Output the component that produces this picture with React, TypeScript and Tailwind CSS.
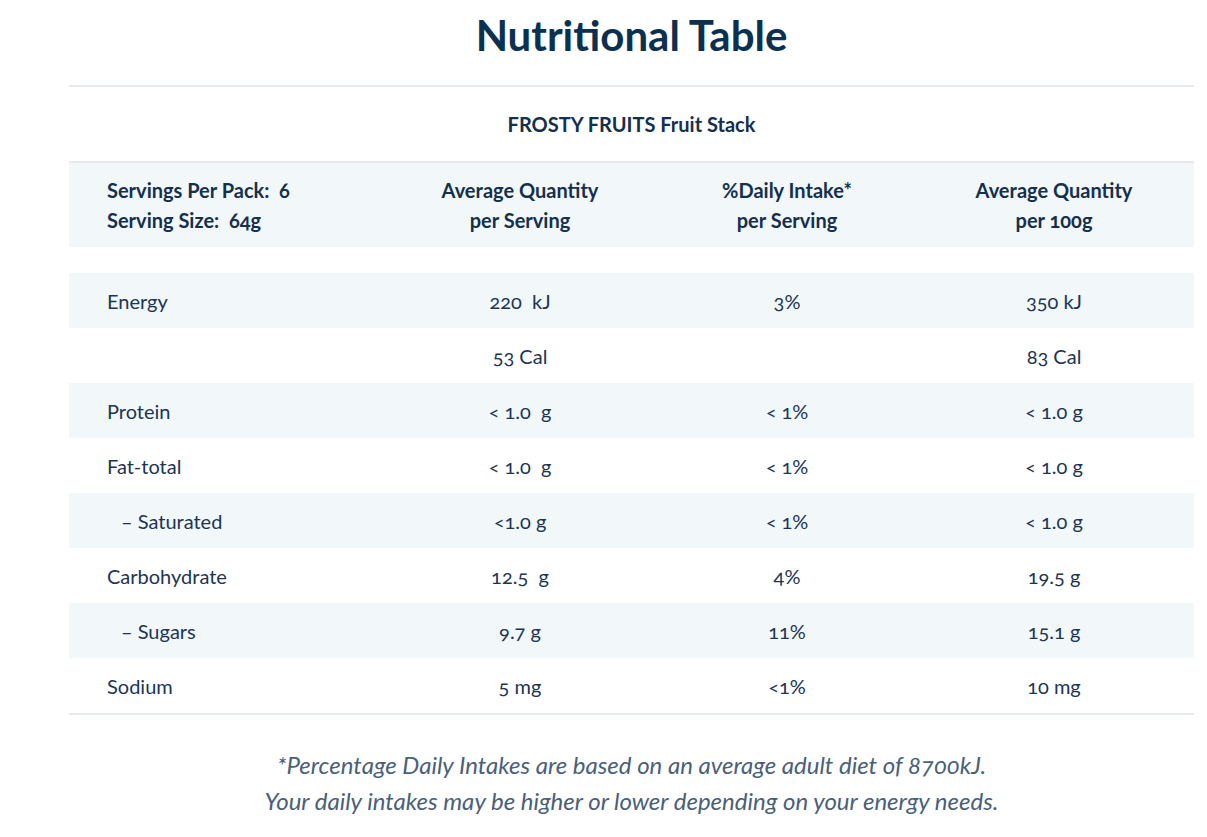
const rows = [
  { name: "Energy", serving: "220  kJ", daily: "3%", per100: "350 kJ", shaded: true },
  { name: "", serving: "53 Cal", daily: "", per100: "83 Cal", shaded: false },
  { name: "Protein", serving: "< 1.0  g", daily: "< 1%", per100: "< 1.0 g", shaded: true },
  { name: "Fat-total", serving: "< 1.0  g", daily: "< 1%", per100: "< 1.0 g", shaded: false },
  { name: "– Saturated", serving: "<1.0 g", daily: "< 1%", per100: "< 1.0 g", shaded: true, indent: true },
  { name: "Carbohydrate", serving: "12.5  g", daily: "4%", per100: "19.5 g", shaded: false },
  { name: "– Sugars", serving: "9.7 g", daily: "11%", per100: "15.1 g", shaded: true, indent: true },
  { name: "Sodium", serving: "5 mg", daily: "<1%", per100: "10 mg", shaded: false },
]

export default function App() {
  return (
    <div className="min-h-screen bg-white font-['Lato','Liberation_Sans',sans-serif] text-[#1c3552] oldstyle-nums">
      <div className="ml-[69px] w-[1125px]">
        <h1 className="pt-[9px] pb-[24px] text-center text-[42px] font-bold leading-[52px] text-[#0b3050]">
          Nutritional Table
        </h1>

        <div className="border-t-2 border-[#e6eaed]">
          <div className="py-[24px] text-center text-[20px] font-bold leading-[26px] text-[#14304d]">
            FROSTY FRUITS Fruit Stack
          </div>
        </div>

        <div className="border-t-2 border-[#e6eaed]">
          <div className="grid grid-cols-[311px_280px_254px_280px] bg-[#f2f7fa] py-[12px] text-[20px] font-bold leading-[30px] text-[#14304d]">
            <div className="pl-[38px]">
              <div className="whitespace-pre">Servings Per Pack:  6</div>
              <div className="whitespace-pre">Serving Size:  64g</div>
            </div>
            <div className="text-center">
              <div>Average Quantity</div>
              <div>per Serving</div>
            </div>
            <div className="text-center">
              <div>%Daily Intake*</div>
              <div>per Serving</div>
            </div>
            <div className="text-center">
              <div>Average Quantity</div>
              <div>per 100g</div>
            </div>
          </div>
        </div>

        <div className="mt-[26px] border-b-2 border-[#e6eaed]">
          {rows.map((r, i) => (
            <div
              key={i}
              className={`grid h-[55px] grid-cols-[311px_280px_254px_280px] items-center text-[20px] ${
                r.shaded ? "bg-[#f2f7fa]" : "bg-white"
              }`}
            >
              <div className={r.indent ? "pl-[52px] whitespace-pre" : "pl-[38px] whitespace-pre"}>
                {r.name}
              </div>
              <div className="text-center whitespace-pre">{r.serving}</div>
              <div className="text-center">{r.daily}</div>
              <div className="text-center">{r.per100}</div>
            </div>
          ))}
        </div>

        <div className="pt-[32px] text-center text-[24px] italic leading-[36px] text-[#4a6079]">
          <p>*Percentage Daily Intakes are based on an average adult diet of 8700kJ.</p>
          <p>Your daily intakes may be higher or lower depending on your energy needs.</p>
        </div>
      </div>
    </div>
  )
}
